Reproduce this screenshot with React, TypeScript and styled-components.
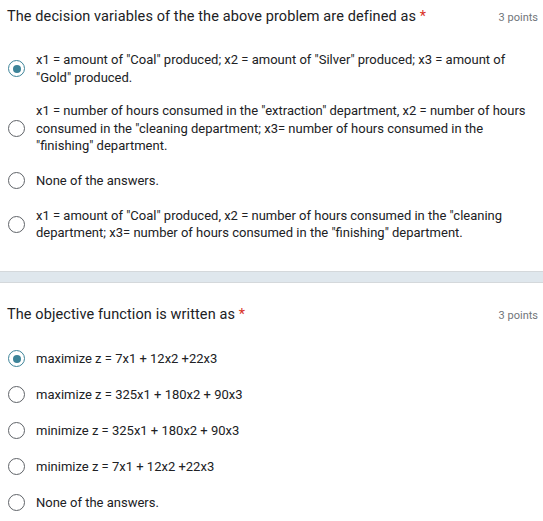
import styled, { createGlobalStyle } from 'styled-components';

const GlobalStyle = createGlobalStyle`
  body {
    margin: 0;
    background: #ffffff;
    font-family: Roboto, 'Liberation Sans', Arial, sans-serif;
  }
`;

type Question = {
  title: string;
  points: string;
  options: string[];
  selected: number;
};

const questions: Question[] = [
  {
    title: 'The decision variables of the the above problem are defined as',
    points: '3 points',
    selected: 0,
    options: [
      'x1 = amount of "Coal" produced; x2 = amount of "Silver" produced; x3 = amount of "Gold" produced.',
      'x1 = number of hours consumed in the "extraction" department, x2 = number of hours consumed in the "cleaning department; x3= number of hours consumed in the "finishing" department.',
      'None of the answers.',
      'x1 = amount of "Coal" produced, x2 = number of hours consumed in the "cleaning department; x3= number of hours consumed in the "finishing" department.',
    ],
  },
  {
    title: 'The objective function is written as',
    points: '3 points',
    selected: 0,
    options: [
      'maximize z = 7x1 + 12x2 +22x3',
      'maximize z = 325x1 + 180x2 + 90x3',
      'minimize z = 325x1 + 180x2 + 90x3',
      'minimize z = 7x1 + 12x2 +22x3',
      'None of the answers.',
    ],
  },
];

function App() {
  return (
    <Page>
      <GlobalStyle />
      <Card>
        <QuestionBlock q={questions[0]} />
      </Card>
      <Divider />
      <Card>
        <QuestionBlock q={questions[1]} />
      </Card>
    </Page>
  );
}
export default App;

function QuestionBlock({ q }: { q: Question }) {
  return (
    <>
      <Header>
        <Title>
          {q.title} <Required>*</Required>
        </Title>
        <Points>{q.points}</Points>
      </Header>
      <Options>
        {q.options.map((text, i) => (
          <Option key={i}>
            <Radio $checked={i === q.selected} />
            <OptionText>{text}</OptionText>
          </Option>
        ))}
      </Options>
    </>
  );
}

const Page = styled.div`
  width: 543px;
  display: flex;
  flex-direction: column;
`;

const Card = styled.div`
  padding: 6px 5px 20px 7px;
`;

const Header = styled.div`
  display: flex;
  justify-content: space-between;
  align-items: baseline;
  padding-bottom: 15px;
`;

const Title = styled.div`
  font-size: 14.5px;
  line-height: 22px;
  color: #202124;
  letter-spacing: 0.1px;
`;

const Required = styled.span`
  color: #d93025;
`;

const Points = styled.div`
  font-size: 11px;
  color: #70757a;
`;

const Options = styled.div`
  display: flex;
  flex-direction: column;
`;

const Option = styled.div`
  display: flex;
  align-items: center;
  gap: 11px;
  padding: 8px 0;
`;

const Radio = styled.span<{ $checked: boolean }>`
  flex: none;
  box-sizing: border-box;
  width: 17px;
  height: 17px;
  margin: 1.5px 0 1.5px 1px;
  border-radius: 50%;
  border: 1.6px solid ${(p) => (p.$checked ? '#3d8499' : '#5f6368')};
  display: flex;
  align-items: center;
  justify-content: center;
  &::after {
    content: '';
    width: 8px;
    height: 8px;
    border-radius: 50%;
    background: #3d8499;
    display: ${(p) => (p.$checked ? 'block' : 'none')};
  }
`;

const OptionText = styled.div`
  font-size: 13px;
  line-height: 17.5px;
  color: #202124;
  padding-right: 8px;
`;

const Divider = styled.div`
  height: 10px;
  background: #dfe7ed;
  border-top: 1px solid #d4d8db;
  border-bottom: 1px solid #d4d8db;
  margin: 1px 0 15px;
`;
